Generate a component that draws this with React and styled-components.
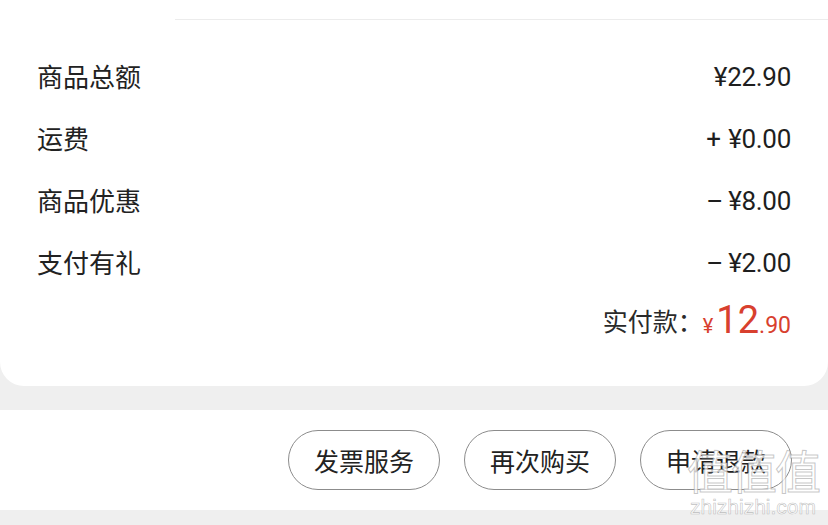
import React from "react";
import styled, { createGlobalStyle } from "styled-components";

const Global = createGlobalStyle`
  html, body { margin: 0; padding: 0; background: #efefef; }
  body { font-family: Roboto, "Noto Sans CJK SC", sans-serif; }
  * { box-sizing: border-box; }
`;

const Page = styled.div`
  width: 828px;
  height: 525px;
  overflow: hidden;
  position: relative;
  background: #efefef;
  display: flex;
  flex-direction: column;
`;

const Card = styled.section`
  background: #fff;
  height: 386px;
  border-radius: 0 0 24px 24px;
  padding-top: 19px;
  display: flex;
  flex-direction: column;
`;

const Divider = styled.div`
  height: 1px;
  margin-left: 175px;
  background: #ececec;
`;

const List = styled.div`
  padding: 24px 37px 0 37px;
  display: flex;
  flex-direction: column;
`;

const Row = styled.div`
  height: 62px;
  display: flex;
  align-items: center;
  justify-content: space-between;
`;

const Label = styled.span`
  font-family: "Noto Sans CJK SC", sans-serif;
  font-size: 26px;
  color: #222;
`;

const Value = styled.span`
  font-family: Roboto, sans-serif;
  font-size: 26px;
  color: #1e1e1e;
  letter-spacing: -0.3px;
  display: inline-flex;
  align-items: center;
  padding-top: 4px;
`;

const Sign = styled.span`
  display: inline-block;
  width: 22px;
  text-align: left;
`;

const TotalRow = styled.div`
  height: 56px;
  display: flex;
  align-items: center;
  justify-content: flex-end;
  padding-right: 37px;
`;

const TotalLabel = styled.span`
  font-family: "Noto Sans CJK SC", sans-serif;
  font-size: 25px;
  color: #2a2a2a;
`;

const Price = styled.span`
  font-family: Roboto, sans-serif;
  color: #d8402e;
  display: inline-flex;
  align-items: baseline;
`;

const PricePart = styled.span`
  font-size: ${(p) => p.$size}px;
  margin-right: ${(p) => p.$gap || 0}px;
`;

const Spacer = styled.div`
  height: 24px;
  flex: none;
`;

const ActionBar = styled.div`
  height: 100px;
  background: #fff;
  display: flex;
  align-items: center;
  justify-content: flex-end;
  gap: 24px;
  padding-right: 36px;
`;

const Button = styled.button`
  width: 152px;
  height: 60px;
  border-radius: 30px;
  border: 1px solid #8c8c8c;
  background: #fff;
  font-family: "Noto Sans CJK SC", sans-serif;
  font-size: 25px;
  color: #222;
  padding: 0;
`;

const Watermark = styled.div`
  position: absolute;
  right: 0;
  bottom: 6px;
  width: 150px;
  display: flex;
  flex-direction: column;
  align-items: center;
  pointer-events: none;
`;

const WaterGlyphs = styled.span`
  font-family: "Noto Sans CJK SC", sans-serif;
  font-size: 46px;
  line-height: 52px;
  color: rgba(255, 255, 255, 0.75);
  -webkit-text-stroke: 1px rgba(150, 150, 150, 0.55);
  letter-spacing: -2px;
`;

const WaterUrl = styled.span`
  font-family: "Liberation Sans", sans-serif;
  font-size: 21px;
  color: rgba(255, 255, 255, 0.85);
  -webkit-text-stroke: 0.6px rgba(150, 150, 150, 0.6);
`;

const rows = [
  ["商品总额", "", "¥22.90"],
  ["运费", "+", "¥0.00"],
  ["商品优惠", "–", "¥8.00"],
  ["支付有礼", "–", "¥2.00"],
];

export default function App() {
  return (
    <Page>
      <Global />
      <Card>
        <Divider />
        <List>
          {rows.map(([l, s, v]) => (
            <Row key={l}>
              <Label>{l}</Label>
              <Value>
                {s && <Sign>{s}</Sign>}
                {v}
              </Value>
            </Row>
          ))}
        </List>
        <TotalRow>
          <TotalLabel>实付款：</TotalLabel>
          <Price>
            <PricePart $size={20} $gap={3}>¥</PricePart>
            <PricePart $size={38}>12</PricePart>
            <PricePart $size={23}>.90</PricePart>
          </Price>
        </TotalRow>
      </Card>
      <Spacer />
      <ActionBar>
        <Button>发票服务</Button>
        <Button>再次购买</Button>
        <Button>申请退款</Button>
      </ActionBar>
      <Watermark>
        <WaterGlyphs>值值值</WaterGlyphs>
        <WaterUrl>zhizhizhi.com</WaterUrl>
      </Watermark>
    </Page>
  );
}
